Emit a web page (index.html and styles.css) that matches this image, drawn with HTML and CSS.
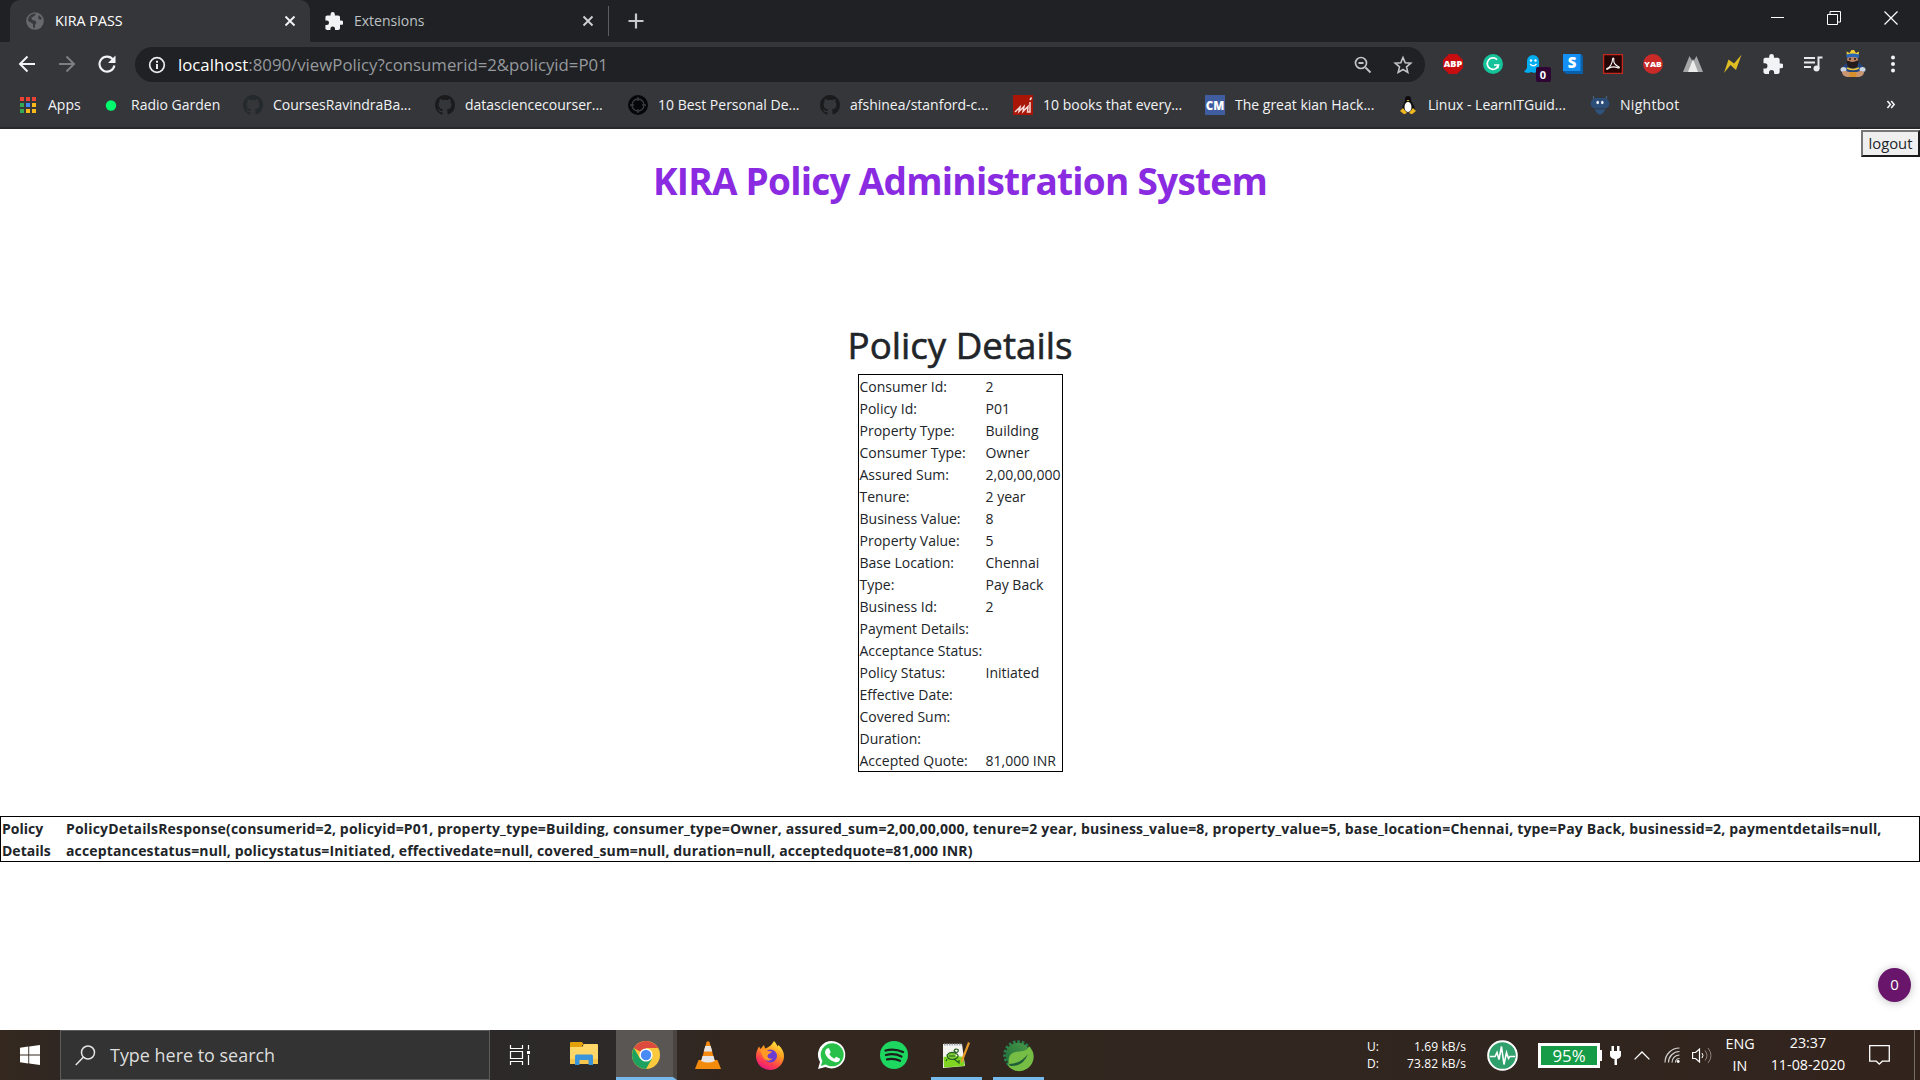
FILE: index.html
```html
<!DOCTYPE html>
<html lang="en">
<head>
<meta charset="utf-8">
<title>KIRA PASS</title>
<link rel="stylesheet" href="styles.css">
</head>
<body>
<svg class="defs" aria-hidden="true">
  <symbol id="close" viewBox="0 0 12 12"><path d="M1.500 1.500l9 9m0-9l-9 9" stroke="currentColor" stroke-width="1.900"/></symbol>
  <symbol id="puzzle" viewBox="1.500 1 21 21"><path fill="currentColor" d="M20.500 11H19V7c0-1.100-.9-2-2-2h-4V3.500a2.500 2.500 0 0 0-5 0V5H4c-1.100 0-1.990.900-1.990 2v3.800H3.500a2.700 2.700 0 0 1 0 5.400H2V20c0 1.100.900 2 2 2h3.800v-1.500a2.700 2.700 0 0 1 5.400 0V22H17c1.100 0 2-.900 2-2v-4h1.500a2.500 2.500 0 0 0 0-5z"/></symbol>
  <symbol id="github" viewBox="0 0 16 16"><path fill="currentColor" d="M8 0C3.580 0 0 3.580 0 8c0 3.540 2.290 6.530 5.470 7.590.400.070.550-.170.550-.380 0-.190-.010-.820-.010-1.490-2.010.370-2.530-.490-2.690-.940-.090-.230-.480-.940-.820-1.130-.280-.150-.680-.520-.010-.530.630-.010 1.080.580 1.230.820.720 1.210 1.870.870 2.330.660.070-.520.280-.870.510-1.070-1.780-.200-3.640-.890-3.640-3.950 0-.870.310-1.590.820-2.150-.080-.200-.360-1.020.080-2.120 0 0 .670-.210 2.200.820a7.600 7.600 0 0 1 4 0c1.530-1.040 2.200-.820 2.200-.820.440 1.100.160 1.920.080 2.120.510.560.820 1.270.820 2.150 0 3.070-1.870 3.750-3.650 3.950.290.250.540.730.540 1.480 0 1.070-.010 1.930-.010 2.200 0 .210.150.460.550.380A8 8 0 0 0 16 8c0-4.420-3.580-8-8-8z"/></symbol>
</svg>

<header class="browser">
  <div class="tabstrip">
    <div class="tab tab-active">
      <svg class="i18" viewBox="0 0 18 18"><circle cx="9" cy="9" r="8.800" fill="#66696d"/><path d="M10 1.500L8.500 4 5.500 5.500 6 8l3 .5 1.500 2L9 13v3.500L7 15v-3L3 9.500 1.800 8A7.300 7.300 0 0 1 10 1.500zM13 3l3 3.500-2 1.500-2-2z" fill="#393a3e"/></svg>
      <span class="tab-title">KIRA PASS</span>
      <svg class="i12"><use href="#close"/></svg>
    </div>
    <div class="tab tab-idle">
      <svg class="i18 white"><use href="#puzzle"/></svg>
      <span class="tab-title">Extensions</span>
      <svg class="i12"><use href="#close"/></svg>
    </div>
    <svg class="newtab" viewBox="0 0 16 16"><path d="M8 .5v15M.5 8h15" stroke="#c8c9cb" stroke-width="2.200"/></svg>
    <div class="winbtns">
      <svg viewBox="0 0 14 14"><path d="M1 6.500h13" stroke="#fff"/></svg>
      <svg viewBox="0 0 14 14"><path d="M.5 3.500h10v10H.5zM3 3V.5h10.500V11H11" fill="none" stroke="#fff"/></svg>
      <svg viewBox="0 0 14 14"><path d="M.5.5l13 13m0-13l-13 13" stroke="#fff" stroke-width="1.200"/></svg>
    </div>
  </div>

  <div class="toolbar">
    <div class="nav">
      <svg viewBox="0 0 18 18"><path d="M17 9H2m7.500-7.500L2 9l7.500 7.500" fill="none" stroke="#f1f3f4" stroke-width="2"/></svg>
      <svg viewBox="0 0 18 18"><path d="M1 9h15M8.500 1.500L16 9l-7.500 7.500" fill="none" stroke="#7d7e81" stroke-width="2"/></svg>
      <svg viewBox="0 0 18 18"><path d="M15 4.600A7.500 7.500 0 1 0 16.400 10.500" fill="none" stroke="#f1f3f4" stroke-width="2.100"/><path d="M17.500.5V8H10z" fill="#f1f3f4"/></svg>
    </div>
    <div class="omnibox">
      <svg class="i18" viewBox="0 0 18 18"><circle cx="9" cy="9" r="7.300" fill="none" stroke="#e8eaed" stroke-width="1.700"/><path d="M9 8v5M9 4.800v2" stroke="#e8eaed" stroke-width="2"/></svg>
      <span class="url"><b>localhost</b>:8090/viewPolicy?consumerid=2&amp;policyid=P01</span>
      <svg class="i18" viewBox="0 0 18 18"><path d="M11.500 11.500l5 5M4.500 7h5" stroke="#c2c4c6" stroke-width="1.800"/><circle cx="7" cy="7" r="5.500" fill="none" stroke="#c2c4c6" stroke-width="1.700"/></svg>
      <svg class="i18 star" viewBox="0 0 18 18"><path d="M9 1.500l2.200 5.300 5.600.4-4.300 3.700 1.300 5.500L9 13.500l-4.800 2.900 1.300-5.500L1.200 7.200l5.600-.4z" fill="none" stroke="#c2c4c6" stroke-width="1.600"/></svg>
    </div>
    <div class="extensions">
      <svg viewBox="0 0 20 20"><path d="M6 0h8l6 6v8l-6 6H6l-6-6V6z" fill="#c70d0f"/><text class="abp" x="10" y="13.400" textLength="18.500" lengthAdjust="spacingAndGlyphs">ABP</text></svg>
      <svg viewBox="0 0 20 20"><circle cx="10" cy="10" r="10" fill="#15c39a"/><path d="M14 5.600A5.700 5.700 0 1 0 15.500 11H11" fill="none" stroke="#fff" stroke-width="1.700"/><path d="M15.600 10.400v4l-3-1z" fill="#fff"/></svg>
      <div class="ghost">
        <svg viewBox="0 0 20 20"><path d="M4 7a6 6 0 0 1 12 0v10l1 2-3.500-1L11 19l-2.500-1L5 19l-4-1 3-4z" fill="#00aef0"/><circle cx="8" cy="6.500" r="1.200" fill="#fff"/><circle cx="12.500" cy="6.500" r="1.200" fill="#fff"/><path d="M7 10q3.500 3.500 6.500 0" fill="none" stroke="#fff" stroke-width="1.300"/></svg>
        <span class="count">0</span>
      </div>
      <svg viewBox="0 0 20 20"><path d="M0 0h18l2 2v18H3l-3-3z" fill="#0b5fa8"/><path d="M0 0h17.500v17H0z" fill="#1490f5"/><text class="glyph-s" x="9" y="13.700">S</text></svg>
      <svg viewBox="0 0 20 20"><path d="M.6.600h18.800v18.800H.6z" fill="#240606" stroke="#c5281c" stroke-width="1.300"/><path d="M4 14.500c3-1 5.500-5.500 5.500-9 0-2 1.700-2 1.300 0C10.400 8.500 12.500 11.500 16 13c1 1-.5 1.400-2 .5-3-1.200-5.500-.7-8.500.8-1.500 1.600-2.500 1-1.500.2z" fill="none" stroke="#fff" stroke-width="1.100"/></svg>
      <svg viewBox="0 0 20 20"><circle cx="10" cy="10" r="10" fill="#c92a27"/><text class="yab" x="10" y="13" textLength="17.500" lengthAdjust="spacingAndGlyphs">YAB</text></svg>
      <svg viewBox="0 0 20 20"><path d="M0 18L6.500 2 10 8l3.500-6L20 18z" fill="#a5a6a8"/><path d="M5 18l5-13 5 13z" fill="#ececec"/></svg>
      <svg viewBox="0 0 20 20"><path d="M1 19L5.500 5.500l5.500 4L18.500.800 13 16l-5.500-5z" fill="#e0bd22"/></svg>
      <svg class="white"><use href="#puzzle"/></svg>
      <svg viewBox="0 0 20 20"><path d="M1 4h11M1 8.500h11M1 13h7" stroke="#e8eaed" stroke-width="2"/><path d="M19.500 3.500H15.500V15" fill="none" stroke="#e8eaed" stroke-width="2"/><circle cx="13.500" cy="14.500" r="3" fill="#e8eaed"/></svg>
      <svg class="avatar" viewBox="0 0 26 28"><path d="M2 20q1-6 6-7h10q5 1 6 7l-5 5H7z" fill="#23457f"/><ellipse cx="3.500" cy="19.500" rx="3" ry="2.500" fill="#cbd6e4"/><ellipse cx="22.500" cy="19.500" rx="3" ry="2.500" fill="#cbd6e4"/><path d="M2 22q3-2 7 0h8q4-2 7 0 0 4-5 5H7q-5-1-5-5z" fill="#c99573"/><circle cx="12.500" cy="10" r="5.500" fill="#bd8463"/><path d="M6.500 10.500l2.500.5q3.500 2 7 0l2.500-.5-1 6q-5 4-10 0z" fill="#241b1c"/><path d="M9 9h2m3 0h2" stroke="#1d1516" stroke-width="1.300"/><path d="M7 18q6 3 12 0" fill="none" stroke="#e9bf35" stroke-width="1.500"/><path d="M7 6l-.5-4.500L9.500 3l2-3h2.500l2 3 3-1.500L18.500 6z" fill="#f4cf35"/><path d="M6.500 4.500q6-2 12.500 0V8q-6-2-12.500 0z" fill="#2b65b5"/><path d="M9.500 22h7v5h-7z" fill="#d6902b"/></svg>
      <svg viewBox="0 0 20 20"><g fill="#f1f3f4"><circle cx="10" cy="3.500" r="2"/><circle cx="10" cy="10" r="2"/><circle cx="10" cy="16.500" r="2"/></g></svg>
    </div>
  </div>

  <nav class="bookmarks">
    <div class="bm"><svg viewBox="0 0 20 20"><path d="M2 2h4v4H2zM8 2h4v4H8zM14 2h4v4h-4z" fill="#ea4335"/><path d="M2 8h4v4H2zM2 14h4v4H2z" fill="#34a853"/><path d="M8 8h4v4H8z" fill="#4285f4"/><path d="M14 8h4v4h-4zM8 14h4v4H8zM14 14h4v4h-4z" fill="#fbb91a"/></svg><span>Apps</span></div>
    <div class="bm"><svg viewBox="0 0 20 20"><circle cx="10" cy="10.500" r="5.200" fill="#00fa6e"/></svg><span>Radio Garden</span></div>
    <div class="bm"><svg class="gh-dim"><use href="#github"/></svg><span>CoursesRavindraBa...</span></div>
    <div class="bm"><svg class="gh"><use href="#github"/></svg><span>datasciencecourser...</span></div>
    <div class="bm"><svg viewBox="0 0 20 20"><circle cx="10" cy="10" r="10" fill="#050607"/><circle cx="10" cy="10" r="6" fill="none" stroke="#3b3c3f" stroke-width="1.300"/><path d="M10 2v4m0 8v4M2 10h4m8 0h4" stroke="#3b3c3f" stroke-width="1.300"/></svg><span>10 Best Personal De...</span></div>
    <div class="bm"><svg class="gh"><use href="#github"/></svg><span>afshinea/stanford-c...</span></div>
    <div class="bm"><svg viewBox="0 0 20 20"><path d="M0 0h20v20H0z" fill="#a91507"/><path d="M2 17l5-5-1 4.500 5-5-1 5 5-5-.5 5.500h2.500V7M17 5l1.500-2.500" fill="none" stroke="#f6dcd9" stroke-width="1.500"/></svg><span>10 books that every...</span></div>
    <div class="bm"><svg viewBox="0 0 20 20"><path d="M0 0h20v20H0z" fill="#3f5d9f"/><text class="cm" x="10" y="15" textLength="18.500" lengthAdjust="spacingAndGlyphs">CM</text></svg><span>The great kian Hack...</span></div>
    <div class="bm"><svg viewBox="0 0 20 20"><path d="M7 4q0-3 3-3t3 3c0 4 4 6 4 12H4C4 10 7 9 7 4z" fill="#0c0c0c"/><ellipse cx="10" cy="12" rx="3.500" ry="5" fill="#fff"/><path d="M2 16l3-3 4 5-3 1.200zM18 16l-3-3-4 5 3 1.200z" fill="#efb81c"/><path d="M8.500 5h3L10 6.500z" fill="#efb81c"/></svg><span>Linux - LearnITGuid...</span></div>
    <div class="bm"><svg viewBox="0 0 20 20"><path d="M3.500 1v4M16.500 1v4" stroke="#48607e" stroke-width="1.200"/><path d="M5 3h10q4 1.500 4.500 6-1 4-4.500 4.500H5Q1.500 13 .5 9 1 4.500 5 3z" fill="#2b4d78"/><path d="M4.500 14.500h11L13 18l-3 2-3-2z" fill="#2f547e"/><ellipse cx="7.700" cy="7.500" rx="1.300" ry="1.700" fill="#f2f6fa"/><ellipse cx="12.300" cy="7.500" rx="1.300" ry="1.700" fill="#f2f6fa"/></svg><span class="wide">Nightbot</span></div>
    <svg class="more" viewBox="0 0 10 10"><path d="M1 1l3.300 4L1 9M5.200 1l3.300 4-3.300 4" fill="none" stroke="#f1f3f4" stroke-width="1.800"/></svg>
  </nav>
</header>

<main class="page">
  <button class="logout">logout</button>
  <h1 class="title">KIRA Policy Administration System</h1>
  <h2 class="subtitle">Policy Details</h2>
  <table class="details">
    <tr><td>Consumer Id:</td><td>2</td></tr>
    <tr><td>Policy Id:</td><td>P01</td></tr>
    <tr><td>Property Type:</td><td>Building</td></tr>
    <tr><td>Consumer Type:</td><td>Owner</td></tr>
    <tr><td>Assured Sum:</td><td>2,00,00,000</td></tr>
    <tr><td>Tenure:</td><td>2 year</td></tr>
    <tr><td>Business Value:</td><td>8</td></tr>
    <tr><td>Property Value:</td><td>5</td></tr>
    <tr><td>Base Location:</td><td>Chennai</td></tr>
    <tr><td>Type:</td><td>Pay Back</td></tr>
    <tr><td>Business Id:</td><td>2</td></tr>
    <tr><td>Payment Details:</td><td></td></tr>
    <tr><td>Acceptance Status:</td><td></td></tr>
    <tr><td>Policy Status:</td><td>Initiated</td></tr>
    <tr><td>Effective Date:</td><td></td></tr>
    <tr><td>Covered Sum:</td><td></td></tr>
    <tr><td>Duration:</td><td></td></tr>
    <tr><td>Accepted Quote:</td><td>81,000 INR</td></tr>
  </table>
  <div class="response">
    <div>Policy<br>Details</div>
    <div><span class="line1">PolicyDetailsResponse(consumerid=2, policyid=P01, property_type=Building, consumer_type=Owner, assured_sum=2,00,00,000, tenure=2 year, business_value=8, property_value=5, base_location=Chennai, type=Pay Back, businessid=2, paymentdetails=null,</span><br><span class="line2">acceptancestatus=null, policystatus=Initiated, effectivedate=null, covered_sum=null, duration=null, acceptedquote=81,000 INR)</span></div>
  </div>
  <div class="bubble">0</div>
</main>

<footer class="taskbar">
  <div class="start"><svg width="20" height="20" viewBox="0 0 20 20"><path d="M0 2.700l8.300-1.200v8H0zM9.200 1.400L20 0v9.500H9.200zM0 10.400h8.300v8L0 17.200zM9.200 10.400H20V20L9.200 18.500z" fill="#fff"/></svg></div>
  <div class="search">
    <svg width="21" height="21" viewBox="0 0 21 21"><circle cx="13" cy="7.500" r="6.500" fill="none" stroke="#e6e6e6" stroke-width="1.500"/><path d="M8.500 12L.8 20" stroke="#e6e6e6" stroke-width="1.500"/></svg>
    <span>Type here to search</span>
  </div>
  <div class="app taskview"><svg width="21" height="20" viewBox="0 0 21 20"><path d="M.5 0v3.500h12V0M.5 6.500h12v7H.5zM.5 20v-3.500h12V20M18.500 0v4.500M18.500 10v10" fill="none" stroke="#fff" stroke-width="1.200"/><path d="M17 6h3v3h-3z" fill="#fff"/></svg></div>
  <div class="app explorer"><svg width="28" height="24" viewBox="0 0 28 24"><path d="M0 1q0-1 1-1h11l2 3h-2v5H0z" fill="#e3a008"/><path d="M0 5h12l2-3h13q1 0 1 1v19H0z" fill="#ffd768"/><path d="M0 17h28v5H0z" fill="#f6c64a"/><path d="M5 23V14q0-1.500 1.500-1.500h15Q23 12.500 23 14v9h-4.500v-5h-9v5z" fill="#3a94dc"/></svg></div>
  <div class="app chrome"><svg width="28" height="28" viewBox="0 0 28 28"><circle cx="14" cy="14" r="14" fill="#fbc93d"/><path d="M14 14L1.900 7A14 14 0 0 1 26.100 7H14z" fill="#dd4b3e"/><path d="M1.900 7A14 14 0 0 0 14 28l6-10.500L14 14 8 17.500z" fill="#1da15f"/><circle cx="14" cy="14" r="6.600" fill="#fff"/><circle cx="14" cy="14" r="5.200" fill="#4a8af4"/></svg></div>
  <div class="app"><svg width="26" height="28" viewBox="0 0 26 28"><path d="M3.500 19h19L26 28H0z" fill="#f28a0c"/><path d="M11.500 1q1.500-1.500 3 0L20 21q-7 4-14 0z" fill="#f58b10"/><path d="M10.300 5h5.400l1.600 5.500H8.700zM7.500 15h11l1.300 5q-6.800 3-13.600 0z" fill="#e6e6e6"/></svg></div>
  <div class="app"><svg width="28" height="29" viewBox="0 0 28 29"><defs><linearGradient id="fx" x1=".8" y1="0" x2=".3" y2="1"><stop offset="0" stop-color="#fff044"/><stop offset=".4" stop-color="#ff9a20"/><stop offset=".75" stop-color="#ff3d4d"/><stop offset="1" stop-color="#e31587"/></linearGradient></defs><path d="M18 0c2 2 3 4 3.500 5.500l1-1.500C26 7 28 11 28 15a14 14 0 0 1-28 0C0 11 1.500 8 3 5.500L4.500 8 8 4l1 3.500C13 6 15 5 18 0z" fill="url(#fx)"/><circle cx="14.500" cy="15" r="6.500" fill="#6c3bd2"/><path d="M4 9c4-2 6 0 8 1l4 .5c-1 2-4 2-4.500 4.500 0 2 2 3 5 2.500-3 4-9 2-10-3z" fill="#ff9a27"/></svg></div>
  <div class="app"><svg width="28" height="28" viewBox="0 0 28 28"><path d="M0 28l2-7A13.700 13.700 0 1 1 7.500 26z" fill="#fff"/><circle cx="14.200" cy="13.800" r="11.500" fill="#29c04a"/><path d="M2.800 25l2-6 4 4z" fill="#29c04a"/><path d="M9 7.500l2-.3 1.700 4-1.400 2q2 3 5 4.500l1.800-2 4 2c-.3 3-3 4-5.300 3.300-5-1.500-8.500-5-9.600-8.500-.4-2 .3-4 1.800-5z" fill="#fff"/></svg></div>
  <div class="app"><svg width="28" height="28" viewBox="0 0 28 28"><circle cx="14" cy="14" r="14" fill="#1ed760"/><path d="M5.500 9.500q9-2.500 17.500 1.500M6 14q8-2.200 15.500 1.500M7 18.300q7-1.500 13 1.500" fill="none" stroke="#1b1e1b" stroke-width="2.300" stroke-linecap="round"/></svg></div>
  <div class="app running"><svg width="28" height="27" viewBox="0 0 28 27"><path d="M1 2h19l3 22-22 2z" fill="#f4f5f0"/><path d="M1.500 15q9-2 20 0l1 9L2 25.500z" fill="#80d422"/><path d="M2 2.500h18" stroke="#9da3a8" stroke-width="2" stroke-dasharray="1.500 1"/><ellipse cx="9.500" cy="14" rx="4.500" ry="3.500" fill="#7ccb36"/><path d="M5 13q3-4 8-2t2 5q-5 3-9 0zM12 9q1-3 4-1.500 1 3-2 3zM5 17l-1 2m8-2l5 4v-3M7 14h6" fill="none" stroke="#235d1d" stroke-width="1.200"/><path d="M26 0l2 1-7 18-2 2v-3z" fill="#e69b28"/></svg></div>
  <div class="app running"><svg width="30" height="30" viewBox="0 0 30 30"><defs><linearGradient id="leaf" x1="0" y1="1" x2="1" y2="0"><stop offset="0" stop-color="#1a6b3a"/><stop offset="1" stop-color="#4b9a48"/></linearGradient></defs><circle cx="15" cy="15" r="13" fill="none" stroke="#28824c" stroke-width="3.500" stroke-dasharray="2.600 1.700"/><circle cx="15" cy="15" r="12.300" fill="url(#leaf)"/><path d="M29.500 11A14.500 14.500 0 0 1 6 27l-1-2q1-1 .5-4C6 11 14 12 20 11q5-1 6-5z" fill="#75bd44"/><path d="M6 24q11 0 19-10-5 13-18 12z" fill="#205f37"/></svg></div>
  <div class="net"><span>U:</span><span>1.69 kB/s</span><span>D:</span><span>73.82 kB/s</span></div>
  <div class="tray"><svg width="31" height="31" viewBox="0 0 31 31"><circle cx="15.500" cy="15.500" r="14.300" fill="#2f9f6b" stroke="#fff" stroke-width="2"/><path d="M3 16.500h5l2-4 2 7 2.500-13 2.500 18 2.500-12 2 6 1.500-2h5" fill="none" stroke="#fff" stroke-width="1.600"/></svg></div>
  <div class="battery"><span>95%</span></div>
  <div class="tray"><svg width="11" height="19" viewBox="0 0 11 19"><path d="M1.500 0h2.500v5h3V0h2.500v5H11v4q0 3-4 4v6H4.500v-6Q0 12 0 9V5h1.500z" fill="#fff"/></svg></div>
  <div class="tray"><svg width="16" height="9" viewBox="0 0 16 9"><path d="M.6 8.400L8 1l7.400 7.400" fill="none" stroke="#fff" stroke-width="1.300"/></svg></div>
  <div class="tray"><svg width="16" height="16" viewBox="0 0 16 16"><g fill="none" stroke="#d8d6d4" stroke-width="1.200"><path d="M1 15.500A14.500 14.500 0 0 1 15.500 1M4.500 15.500A11 11 0 0 1 15.500 4.500M8 15.500A7.500 7.500 0 0 1 15.500 8M11.500 15.500a4 4 0 0 1 4-4"/></g><circle cx="14.200" cy="14.500" r="1.400" fill="#fff"/></svg></div>
  <div class="tray"><svg width="20" height="17" viewBox="0 0 20 17"><path d="M.6 5.500h3L7.500 2v13l-3.900-3.500h-3z" fill="none" stroke="#fff" stroke-width="1.200"/><path d="M10 6q2 2.500 0 5" fill="none" stroke="#fff"/><path d="M13 3.500q4 5 0 10M16 1q6 7.500 0 15" fill="none" stroke="#8d8580"/></svg></div>
  <div class="stack"><span class="lang">ENG</span><span class="lang">IN</span></div>
  <div class="stack clock"><span class="time">23:37</span><span class="date">11-08-2020</span></div>
  <div class="tray"><svg width="21" height="20" viewBox="0 0 21 20"><path d="M.7.700h19.600v15.500h-7l-3 3-3-3H.7z" fill="none" stroke="#fff" stroke-width="1.300"/></svg></div>
  <div class="peek"></div>
</footer>
</body>
</html>
```
FILE: styles.css
```css
* { box-sizing: border-box; }
body {
  margin: 0;
  width: 1920px;
  height: 1080px;
  display: flex;
  flex-direction: column;
  overflow: hidden;
  background: #fff;
  font-family: "Open Sans", "Noto Sans", sans-serif;
  color: #212529;
}
svg { display: block; flex: none; overflow: visible; }
svg text { font-family: "Open Sans", sans-serif; font-weight: 800; fill: #fff; text-anchor: middle; }
.defs { position: absolute; width: 0; height: 0; overflow: hidden; }
.i12 { width: 12px; height: 12px; }
.i18 { width: 18px; height: 18px; }
.white { color: #f1f3f4; }

/* Browser chrome */
.browser { height: 129px; background: #35363a; border-bottom: 2px solid #28292c; flex: none; }
.tabstrip { height: 42px; background: #202124; display: flex; align-items: center; padding-left: 10px; }
.tab { height: 42px; display: flex; align-items: center; font-size: 14px; }
.tab-title { flex: 1; padding-bottom: 2px; }
.tab-active { width: 300px; background: #35363a; border-radius: 10px 10px 0 0; padding: 0 14px 0 16px; gap: 11px; color: #fff; font-size: 14.300px; }
.tab-idle { width: 299px; height: 30px; padding: 0 14px 0 15px; gap: 11px; color: #bdc1c6; border-right: 1px solid #5b5d61; }
.tab-active .i12 { color: #f1f3f4; }
.tab-idle .i12 { color: #cfd1d4; }
.newtab { width: 16px; height: 16px; margin-left: 19px; }
.winbtns { margin-left: auto; display: flex; gap: 43px; padding: 0 22px 6px 0; }
.winbtns svg { width: 14px; height: 14px; }

.toolbar { height: 44px; display: flex; align-items: center; }
.nav { width: 135px; display: flex; gap: 22px; padding-left: 18px; }
.nav svg { width: 18px; height: 18px; }
.omnibox { width: 1290px; height: 35px; margin-top: 1px; border-radius: 18px; background: #202124; display: flex; align-items: center; padding: 0 13px 0 13px; }
.url { flex: 1; margin-left: 12px; font-size: 16.800px; color: #96999d; line-height: 24px; }
.url b { font-weight: 400; color: #fff; }
.star { margin-left: 22px; }
.extensions { display: flex; gap: 20px; margin-left: 17.500px; align-items: center; }
.extensions svg { width: 20px; height: 20px; }
.extensions .avatar { width: 26px; height: 28px; margin: 0 -3px; }
.abp { font-size: 9px; }
.yab { font-size: 7.500px; }
.glyph-s { font-size: 15px; }
.cm { font-size: 13px; }
.ghost { position: relative; }
.count { position: absolute; left: 13px; top: 13px; width: 15px; height: 15px; border-radius: 2px; background: #2e0533; color: #fff; font-size: 11px; font-weight: 700; line-height: 15px; text-align: center; }

.bookmarks { height: 37px; display: grid; grid-template-columns: 83px 142px 192px 193px 192px 193px 192px 193px 192px 294px auto; padding-left: 18px; align-items: center; color: #f1f3f4; font-size: 14px; }
.bm { display: flex; align-items: center; gap: 10px; white-space: nowrap; }
.bm svg { width: 20px; height: 20px; }
.wide { letter-spacing: 0.300px; }
.gh { color: #1b1b1d; }
.gh-dim { color: #24292e; }
.more { width: 10px; height: 9px; margin-left: 2px; }

/* Policy page */
.page { height: 901px; position: relative; display: flex; flex-direction: column; align-items: center; flex: none; }
.logout { align-self: flex-end; width: 59px; height: 27px; margin-top: 1px; padding: 0 0 1px; border: 2px solid; border-color: #767676 #1a1a1a #1a1a1a #767676; background: #efefef; font: 14.800px/20px "Open Sans", sans-serif; color: #212529; }
.title { margin: 1px 0 0; height: 45px; line-height: 45px; font-size: 37px; font-weight: 700; letter-spacing: -0.750px; color: #8a2be2; white-space: nowrap; }
.subtitle { margin: 120px 0 0; height: 45px; line-height: 45px; font-size: 36.700px; font-weight: 500; -webkit-text-stroke: 0.600px #212529; white-space: nowrap; }
.details { width: 205px; height: 398px; margin-top: 6px; border: 1px solid #000; border-collapse: separate; border-spacing: 0; font-size: 14px; line-height: 20px; white-space: nowrap; }
.details td { height: 22px; padding: 2px 0 0; }
.details td:first-child { width: 127px; padding-left: 1px; }
.response { width: 1920px; height: 46px; margin-top: 44px; border: 1px solid #000; display: grid; grid-template-columns: 64px 1fr; padding: 1px 0 0 1px; font-size: 14px; line-height: 22px; font-weight: 700; white-space: nowrap; }
.line1 { letter-spacing: 0.180px; }
.line2 { letter-spacing: 0.140px; }
.bubble { position: absolute; right: 9px; bottom: 28px; width: 33px; height: 34px; border-radius: 50%; background: #68156b; color: #fff; font-size: 15px; line-height: 32px; text-align: center; box-shadow: 0 1px 8px rgba(0, 0, 0, .25); }

/* Windows taskbar */
.taskbar { height: 50px; flex: none; display: grid; grid-template-columns: 60px 430px 62px 64px 61px 62px 62px 62px 62px 62px 62px 419px 68px 68px 22px 32px 28px 32px 44px 92px 50px 16px; color: #fff; background: linear-gradient(90deg, #35291f 0, #302722 3%, #2c2929 27%, #2d2929 32%, #33271f 38%, #30261f 80%, #33231d 100%); }
.taskbar > div { display: flex; align-items: center; justify-content: center; }
.taskbar > .search { justify-content: flex-start; gap: 14px; padding-left: 14px; background: #333; border: 1px solid #5c5c5c; font-size: 17.950px; color: #dedede; }
.taskbar > .taskview { padding-right: 2px; }
.taskbar > .explorer { padding-right: 1px; padding-bottom: 2px; }
.taskbar > .chrome { background: #5a5653; border-bottom: 3px solid #76b9ed; padding-top: 3px; border-right: 4px solid #4b4541; padding-left: 3px; }
.running { background: linear-gradient(#76b9ed, #76b9ed) center bottom / 51px 3px no-repeat; }
.taskbar > .net { display: grid; grid-template-columns: 1fr auto; grid-template-rows: 17px 17px; align-content: center; justify-content: stretch; padding: 0 2px 0 318px; font-size: 12px; line-height: 17px; letter-spacing: 0.100px; }
.net span:nth-child(even) { text-align: right; }
.taskbar > .battery { width: 62px; height: 25px; align-self: center; margin-left: 2px; border: 3px solid #fff; background: #169c47; font-size: 16.800px; position: relative; }
.battery::after { content: ""; position: absolute; right: -5px; top: 4px; width: 2px; height: 11px; background: #fff; }
.taskbar > .stack { flex-direction: column; justify-content: flex-start; padding-top: 3px; font-size: 14.300px; line-height: 22px; }
.taskbar > .clock { padding-top: 2px; }
.taskbar > .peek { margin-left: 10px; border-left: 1px solid #756d68; }
```
